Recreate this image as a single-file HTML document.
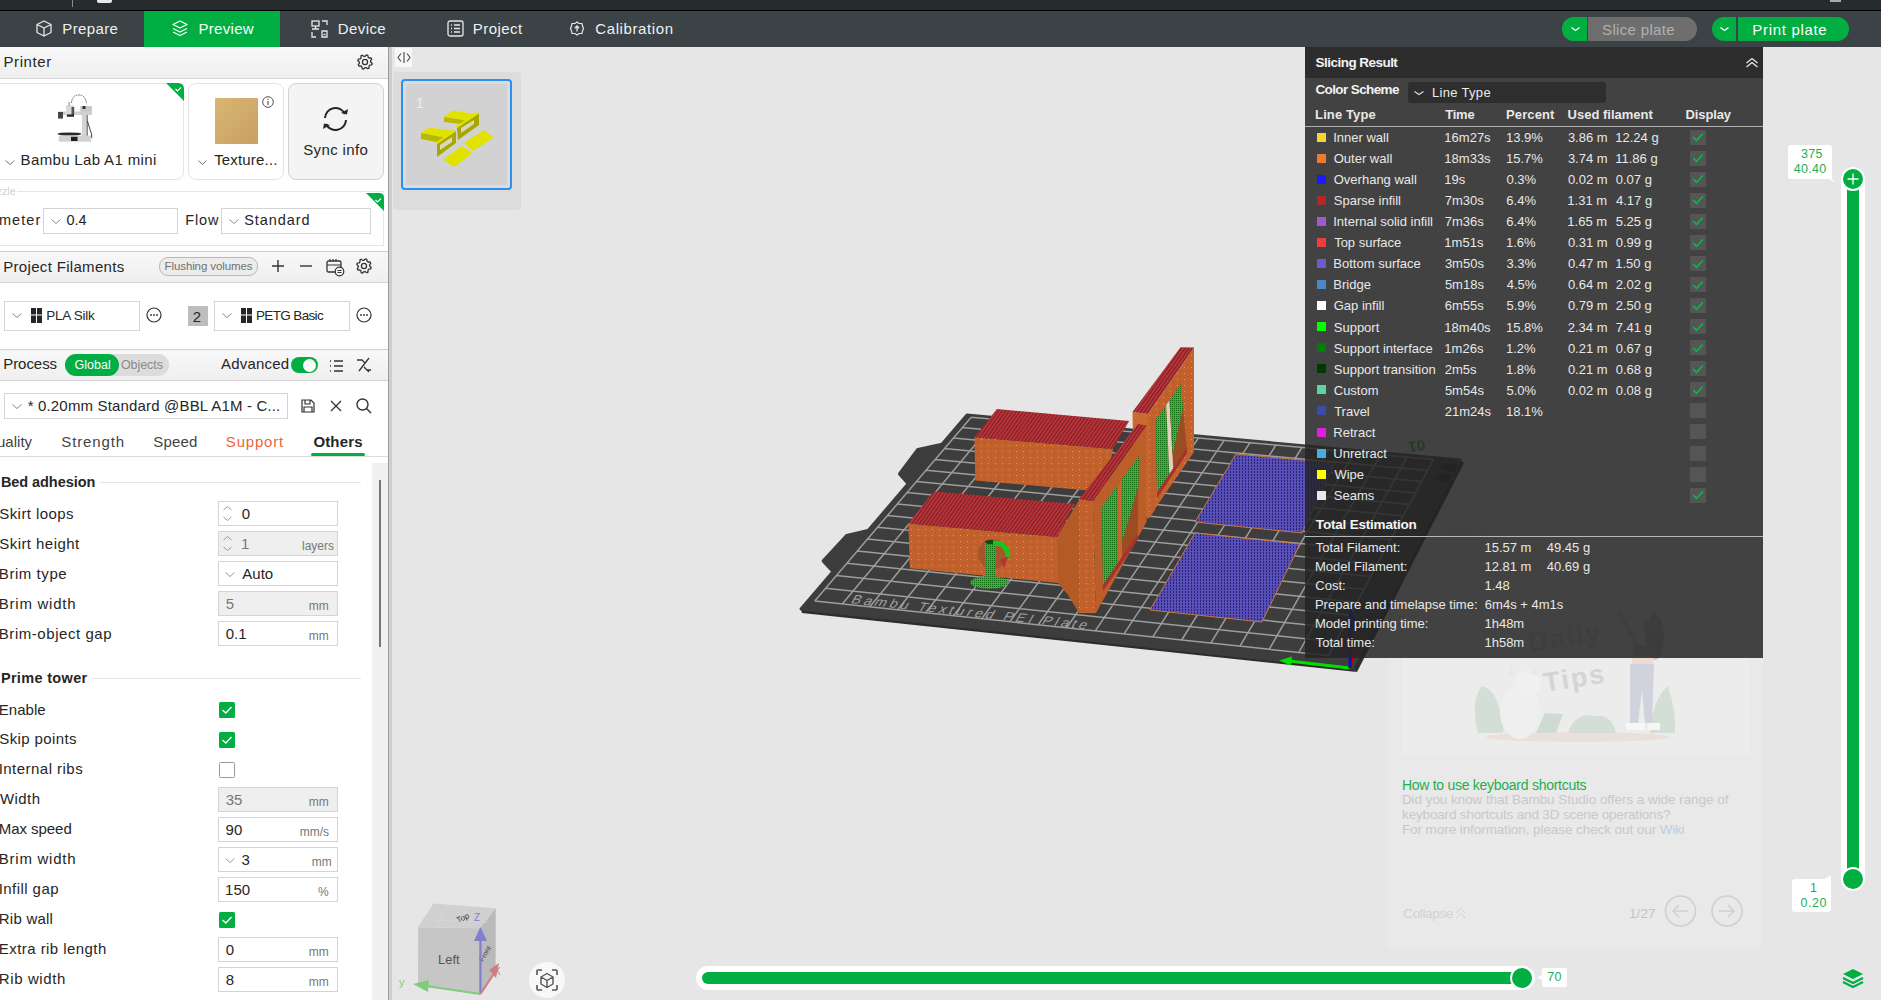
<!DOCTYPE html><html><head><meta charset="utf-8"><style>
*{margin:0;padding:0;box-sizing:border-box}
html,body{width:1881px;height:1000px;overflow:hidden;background:#e6e6e6;font-family:"Liberation Sans",sans-serif;position:relative}
.a{position:absolute}
.t{position:absolute;white-space:nowrap;line-height:1}
svg{position:absolute;overflow:visible}
</style></head><body><div class="a" style="left:0px;top:0px;width:1881px;height:10px;background:#262c2e"></div>
<div class="a" style="left:72px;top:0px;width:1px;height:7px;background:#8a8f90"></div>
<div class="a" style="left:97px;top:0px;width:15px;height:3px;background:#e8e8e8;border-radius:0 0 2px 2px"></div>
<div class="a" style="left:1830px;top:0px;width:11px;height:2px;background:#aaa"></div>
<div class="a" style="left:0px;top:10px;width:1881px;height:1px;background:#000"></div>
<div class="a" style="left:0px;top:11px;width:1881px;height:36px;background:#3b4346"></div>
<div class="a" style="left:144px;top:11px;width:136px;height:36px;background:#00ae42"></div>
<div class="t" style="left:62.30px;top:21.25px;font-size:15px;color:#f0f0f0;letter-spacing:0.375px;">Prepare</div>
<div class="t" style="left:198.50px;top:21.25px;font-size:15px;color:#fff;letter-spacing:0.308px;">Preview</div>
<div class="t" style="left:337.80px;top:21.25px;font-size:15px;color:#f0f0f0;letter-spacing:0.410px;">Device</div>
<div class="t" style="left:472.80px;top:21.25px;font-size:15px;color:#f0f0f0;letter-spacing:0.450px;">Project</div>
<div class="t" style="left:595.25px;top:21.25px;font-size:15px;color:#f0f0f0;letter-spacing:0.610px;">Calibration</div>
<svg style="left:36px;top:20px;" width="16" height="17" viewBox="0 0 16 17"><path d="M8 1 L15 4.5 L15 12.5 L8 16 L1 12.5 L1 4.5 Z M1 4.5 L8 8 L15 4.5 M8 8 L8 16" fill="none" stroke="#e8e8e8" stroke-width="1.3" stroke-linejoin="round"/></svg>
<svg style="left:172px;top:20px;" width="16" height="17" viewBox="0 0 16 17"><path d="M8 1 L15 4.5 L8 8 L1 4.5 Z M1 8.5 L8 12 L15 8.5 M1 12 L8 15.5 L15 12" fill="none" stroke="#fff" stroke-width="1.3" stroke-linejoin="round"/></svg>
<svg style="left:311px;top:20px;" width="18" height="18" viewBox="0 0 18 18"><rect x="1" y="1" width="7" height="5" fill="none" stroke="#e8e8e8" stroke-width="1.3"/><path d="M4.5 6 V9 M1 9 H8 M11 1 H16 V5 M1 12 V17 H5 M16 17 H11 V11 H16 Z M12.5 14.5 H14.5" fill="none" stroke="#e8e8e8" stroke-width="1.3"/></svg>
<svg style="left:447px;top:20px;" width="17" height="17" viewBox="0 0 17 17"><rect x="1" y="1" width="15" height="15" rx="2" fill="none" stroke="#e8e8e8" stroke-width="1.3"/><path d="M4 5 H5 M7 5 H13 M4 8.5 H5 M7 8.5 H13 M4 12 H5 M7 12 H13" stroke="#e8e8e8" stroke-width="1.3"/></svg>
<svg style="left:570px;top:21px;" width="14" height="15" viewBox="0 0 14 15"><path d="M7 1 L9 2.5 L12 2.5 L12.5 5 L13.5 7.5 L12.5 10 L12 12.5 L9 12.5 L7 14 L5 12.5 L2 12.5 L1.5 10 L0.5 7.5 L1.5 5 L2 2.5 L5 2.5 Z" fill="none" stroke="#e8e8e8" stroke-width="1.2"/><path d="M7 10.5 V5 M4.8 7.2 L7 5 L9.2 7.2" fill="none" stroke="#e8e8e8" stroke-width="1.3"/></svg>
<div class="a" style="left:1562px;top:17px;width:135px;height:24px;background:#6e6e6e;border-radius:12px"></div>
<div class="a" style="left:1562px;top:17px;width:25px;height:24px;background:#00ae42;border-radius:12px 0 0 12px"></div>
<div class="a" style="left:1587px;top:17px;width:1px;height:24px;background:#3b4346"></div>
<svg style="left:1571px;top:27px;" width="9" height="4" viewBox="0 0 9 4"><path d="M0.5 0.5 L4.5 3.5 L8.5 0.5" fill="none" stroke="#fff" stroke-width="1.3"/></svg>
<div class="t" style="left:1602.05px;top:21.75px;font-size:15px;color:#b0b0b0;letter-spacing:0.340px;">Slice plate</div>
<div class="a" style="left:1712px;top:17px;width:137px;height:24px;background:#00ae42;border-radius:12px"></div>
<div class="a" style="left:1736px;top:17px;width:2px;height:24px;background:#3b4346"></div>
<svg style="left:1720px;top:27px;" width="9" height="4" viewBox="0 0 9 4"><path d="M0.5 0.5 L4.5 3.5 L8.5 0.5" fill="none" stroke="#fff" stroke-width="1.3"/></svg>
<div class="t" style="left:1752.30px;top:21.75px;font-size:15px;color:#fff;letter-spacing:0.680px;">Print plate</div>
<div class="a" style="left:0px;top:47px;width:388px;height:953px;background:#fff"></div>
<div class="a" style="left:388px;top:47px;width:1px;height:953px;background:#9c9c9c"></div>
<div class="a" style="left:389px;top:47px;width:3px;height:953px;background:#cecece"></div>
<div class="a" style="left:0px;top:47px;width:388px;height:31px;background:linear-gradient(#f8f8f8,#efefef)"></div>
<div class="a" style="left:0px;top:78px;width:388px;height:1px;background:#d4d4d4"></div>
<div class="t" style="left:3.50px;top:54.45px;font-size:15px;color:#262626;letter-spacing:0.592px;">Printer</div>
<svg style="left:357px;top:54px;" width="16" height="16" viewBox="0 0 16 16"><polygon points="15.15,9.45 14.73,10.82 12.72,11.18 12.01,12.04 12.03,14.08 10.77,14.75 9.09,13.59 7.98,13.69 6.55,15.15 5.18,14.73 4.82,12.72 3.96,12.01 1.92,12.03 1.25,10.77 2.41,9.09 2.31,7.98 0.85,6.55 1.27,5.18 3.28,4.82 3.99,3.96 3.97,1.92 5.23,1.25 6.91,2.41 8.02,2.31 9.45,0.85 10.82,1.27 11.18,3.28 12.04,3.99 14.08,3.97 14.75,5.23 13.59,6.91 13.69,8.02" fill="none" stroke="#333" stroke-width="1.3" stroke-linejoin="round"/><circle cx="8" cy="8" r="2.55" fill="none" stroke="#333" stroke-width="1.3"/></svg>
<div class="a" style="left:-10px;top:83px;width:194px;height:97px;background:#fff;border:1px solid #e4e4e4;border-radius:8px"></div>
<svg style="left:166px;top:83px;" width="18" height="18" viewBox="0 0 18 18"><path d="M0 0 H12 Q18 0 18 6 V18 Z" fill="#00ae42"/><path d="M9.5 6 L11.5 8 L15 4.5" fill="none" stroke="#fff" stroke-width="1.1"/></svg>
<svg style="left:0;top:0" width="388" height="200" viewBox="0 0 388 200">
<path d="M71.5 103 Q72 95 78.6 95 Q86 95 86.6 104.3" fill="none" stroke="#555" stroke-width="0.9" stroke-dasharray="1.5 0.8"/>
<rect x="82" y="106" width="6" height="32" fill="#d4d4d4"/>
<rect x="86.5" y="106" width="1.5" height="32" fill="#8a8a8a"/>
<rect x="80.3" y="106" width="11.5" height="8.8" fill="#c8c8c8"/>
<rect x="82.5" y="106" width="3" height="3" fill="#333"/>
<rect x="58" y="111.5" width="33.8" height="3.3" fill="#d0d0d0"/>
<rect x="66" y="105.4" width="8.2" height="11" fill="#d9d9d9"/>
<rect x="71.5" y="107" width="2.7" height="8" fill="#555"/>
<rect x="67" y="114.5" width="7" height="2.2" fill="#222"/>
<rect x="68.5" y="102" width="1.2" height="4" fill="#999"/>
<rect x="58" y="112" width="5" height="6.6" fill="#444"/>
<ellipse cx="69.5" cy="134" rx="12" ry="1.6" fill="#2a2a2a"/>
<rect x="58.8" y="135.6" width="32.5" height="6.1" fill="#d2d2d2"/>
<rect x="71" y="136.8" width="6.5" height="4.2" fill="#1e1e1e"/>
<path d="M87.4 121 L91.5 134 L91.8 138" fill="none" stroke="#333" stroke-width="0.9"/>
</svg>
<svg style="left:5px;top:160px;" width="10" height="5" viewBox="0 0 10 5"><path d="M0.5 0.5 L5.0 4.5 L9.5 0.5" fill="none" stroke="#777" stroke-width="1"/></svg>
<div class="t" style="left:20.60px;top:152.25px;font-size:15px;color:#262626;letter-spacing:0.347px;">Bambu Lab A1 mini</div>
<div class="a" style="left:188px;top:83px;width:96px;height:97px;background:#fff;border:1px solid #e4e4e4;border-radius:8px"></div>
<div class="a" style="left:215px;top:98px;width:43px;height:46px;background:linear-gradient(135deg,#d8b673,#c8a062);border-radius:1px"></div>
<svg style="left:262px;top:96px;" width="12" height="12" viewBox="0 0 12 12"><circle cx="6" cy="6" r="5.3" fill="none" stroke="#555" stroke-width="1"/><path d="M6 5 V9" stroke="#555" stroke-width="1.2"/><circle cx="6" cy="3.3" r="0.7" fill="#555"/></svg>
<svg style="left:198px;top:160px;" width="9" height="5" viewBox="0 0 9 5"><path d="M0.5 0.5 L4.5 4.5 L8.5 0.5" fill="none" stroke="#777" stroke-width="1"/></svg>
<div class="t" style="left:214.20px;top:152.25px;font-size:15px;color:#262626;letter-spacing:0.167px;">Texture...</div>
<div class="a" style="left:288px;top:83px;width:96px;height:97px;background:#f4f4f4;border:1px solid #d2d2d2;border-radius:8px"></div>
<svg style="left:321px;top:105px;" width="29" height="28" viewBox="0 0 29 28"><path d="M4 13 A10.5 10.5 0 0 1 24 9" fill="none" stroke="#262626" stroke-width="2"/><path d="M25 15 A10.5 10.5 0 0 1 5 19" fill="none" stroke="#262626" stroke-width="2"/><path d="M20 8 L26 9.5 L27 4" fill="#262626"/><path d="M9 20 L3 18.5 L2 24" fill="#262626"/></svg>
<div class="t" style="left:303.25px;top:142.25px;font-size:15px;color:#262626;letter-spacing:0.369px;">Sync info</div>
<div class="t" style="left:-16.60px;top:186.07px;font-size:10.5px;color:#cfcfcf;letter-spacing:0.000px;">Nozzle</div>
<div class="a" style="left:17px;top:191px;width:367px;height:1px;background:#e6e6e6"></div>
<div class="a" style="left:383px;top:191px;width:1px;height:54px;background:#e6e6e6"></div>
<div class="a" style="left:-1px;top:245px;width:385px;height:1px;background:#e6e6e6"></div>
<svg style="left:366px;top:193px;" width="18" height="18" viewBox="0 0 18 18"><path d="M0 0 H13 Q18 0 18 5 V18 Z" fill="#00ae42"/><path d="M9.5 7 L11.5 9 L15 5.5" fill="none" stroke="#fff" stroke-width="1.1"/></svg>
<div class="t" style="left:-1.02px;top:212.68px;font-size:14.5px;color:#262626;letter-spacing:1.046px;">meter</div>
<div class="a" style="left:43px;top:208px;width:135px;height:26px;background:#fff;border:1px solid #d4d4d4"></div>
<svg style="left:51px;top:219px;" width="10" height="5" viewBox="0 0 10 5"><path d="M0.5 0.5 L5.0 4.5 L9.5 0.5" fill="none" stroke="#888" stroke-width="1"/></svg>
<div class="t" style="left:66.42px;top:212.68px;font-size:14.5px;color:#262626;letter-spacing:0.000px;">0.4</div>
<div class="t" style="left:185.24px;top:212.68px;font-size:14.5px;color:#262626;letter-spacing:0.888px;">Flow</div>
<div class="a" style="left:221px;top:208px;width:150px;height:26px;background:#fff;border:1px solid #d4d4d4"></div>
<svg style="left:229px;top:219px;" width="10" height="5" viewBox="0 0 10 5"><path d="M0.5 0.5 L5.0 4.5 L9.5 0.5" fill="none" stroke="#888" stroke-width="1"/></svg>
<div class="t" style="left:244.28px;top:212.68px;font-size:14.5px;color:#262626;letter-spacing:0.910px;">Standard</div>
<div class="a" style="left:0px;top:251px;width:388px;height:1px;background:#cfcfcf"></div>
<div class="a" style="left:0px;top:252px;width:388px;height:30px;background:linear-gradient(#f8f8f8,#efefef)"></div>
<div class="a" style="left:0px;top:282px;width:388px;height:1px;background:#d4d4d4"></div>
<div class="t" style="left:3.20px;top:258.75px;font-size:15px;color:#262626;letter-spacing:0.325px;">Project Filaments</div>
<div class="a" style="left:159px;top:257px;width:99px;height:19px;background:#ececec;border:1px solid #b8b8b8;border-radius:9px"></div>
<div class="t" style="left:164.58px;top:260.73px;font-size:11.5px;color:#707070;letter-spacing:-0.106px;">Flushing volumes</div>
<svg style="left:271px;top:259px;" width="14" height="14" viewBox="0 0 14 14"><path d="M7 1 V13 M1 7 H13" stroke="#333" stroke-width="1.4"/></svg>
<svg style="left:299px;top:259px;" width="14" height="14" viewBox="0 0 14 14"><path d="M1 7 H13" stroke="#333" stroke-width="1.4"/></svg>
<svg style="left:326px;top:258px;" width="19" height="18" viewBox="0 0 19 18"><rect x="1" y="3" width="14" height="11" rx="1.5" fill="none" stroke="#333" stroke-width="1.3"/><path d="M1 7 H15 M4 3 V1 M7 3 V1 M10 3 V1" stroke="#333" stroke-width="1.2"/><circle cx="13.5" cy="13.5" r="4.3" fill="#f3f3f3" stroke="#333" stroke-width="1.2"/><path d="M11.5 12.5 H15.5 M11.5 14.5 H15.5" stroke="#333" stroke-width="1"/></svg>
<svg style="left:356px;top:258px;" width="16" height="16" viewBox="0 0 16 16"><polygon points="15.15,9.45 14.73,10.82 12.72,11.18 12.01,12.04 12.03,14.08 10.77,14.75 9.09,13.59 7.98,13.69 6.55,15.15 5.18,14.73 4.82,12.72 3.96,12.01 1.92,12.03 1.25,10.77 2.41,9.09 2.31,7.98 0.85,6.55 1.27,5.18 3.28,4.82 3.99,3.96 3.97,1.92 5.23,1.25 6.91,2.41 8.02,2.31 9.45,0.85 10.82,1.27 11.18,3.28 12.04,3.99 14.08,3.97 14.75,5.23 13.59,6.91 13.69,8.02" fill="none" stroke="#333" stroke-width="1.3" stroke-linejoin="round"/><circle cx="8" cy="8" r="2.55" fill="none" stroke="#333" stroke-width="1.3"/></svg>
<div class="a" style="left:4px;top:301px;width:136px;height:30px;background:#fff;border:1px solid #d4d4d4"></div>
<svg style="left:12px;top:313px;" width="10" height="5" viewBox="0 0 10 5"><path d="M0.5 0.5 L5.0 4.5 L9.5 0.5" fill="none" stroke="#888" stroke-width="1"/></svg>
<svg style="left:31px;top:308px;" width="11" height="15" viewBox="0 0 11 15"><rect x="0" y="0" width="11" height="15" fill="#262626"/><path d="M5.5 0 V15 M0 7 H11" stroke="#fff" stroke-width="1"/></svg>
<div class="t" style="left:46.22px;top:308.82px;font-size:13.5px;color:#262626;letter-spacing:-0.263px;">PLA Silk</div>
<svg style="left:146px;top:307px;" width="16" height="16" viewBox="0 0 16 16"><circle cx="8" cy="8" r="7" fill="none" stroke="#333" stroke-width="1.2"/><circle cx="5" cy="8" r="0.9" fill="#333"/><circle cx="8" cy="8" r="0.9" fill="#333"/><circle cx="11" cy="8" r="0.9" fill="#333"/></svg>
<div class="a" style="left:188px;top:306px;width:20px;height:20px;background:#bdbdbd"></div>
<div class="t" style="left:192.75px;top:308.75px;font-size:15px;color:#262626;letter-spacing:0.000px;">2</div>
<div class="a" style="left:214px;top:301px;width:136px;height:30px;background:#fff;border:1px solid #d4d4d4"></div>
<svg style="left:222px;top:313px;" width="10" height="5" viewBox="0 0 10 5"><path d="M0.5 0.5 L5.0 4.5 L9.5 0.5" fill="none" stroke="#888" stroke-width="1"/></svg>
<svg style="left:241px;top:308px;" width="11" height="15" viewBox="0 0 11 15"><rect x="0" y="0" width="11" height="15" fill="#262626"/><path d="M5.5 0 V15 M0 7 H11" stroke="#fff" stroke-width="1"/></svg>
<div class="t" style="left:255.92px;top:308.82px;font-size:13.5px;color:#262626;letter-spacing:-0.632px;">PETG Basic</div>
<svg style="left:356px;top:307px;" width="16" height="16" viewBox="0 0 16 16"><circle cx="8" cy="8" r="7" fill="none" stroke="#333" stroke-width="1.2"/><circle cx="5" cy="8" r="0.9" fill="#333"/><circle cx="8" cy="8" r="0.9" fill="#333"/><circle cx="11" cy="8" r="0.9" fill="#333"/></svg>
<div class="a" style="left:0px;top:349px;width:388px;height:1px;background:#cfcfcf"></div>
<div class="a" style="left:0px;top:350px;width:388px;height:30px;background:linear-gradient(#f8f8f8,#efefef)"></div>
<div class="a" style="left:0px;top:380px;width:388px;height:1px;background:#d4d4d4"></div>
<div class="t" style="left:3.20px;top:355.95px;font-size:15px;color:#262626;letter-spacing:-0.042px;">Process</div>
<div class="a" style="left:65px;top:354px;width:104px;height:22px;background:#dcdcdc;border-radius:11px"></div>
<div class="a" style="left:65px;top:354px;width:54px;height:22px;background:#00ae42;border-radius:11px"></div>
<div class="t" style="left:74.38px;top:359.38px;font-size:12.5px;color:#fff;letter-spacing:0.050px;">Global</div>
<div class="t" style="left:120.88px;top:359.38px;font-size:12.5px;color:#8a8a8a;letter-spacing:-0.058px;">Objects</div>
<div class="t" style="left:221.00px;top:355.95px;font-size:15px;color:#262626;letter-spacing:0.214px;">Advanced</div>
<div class="a" style="left:291px;top:357px;width:27px;height:16px;background:#00ae42;border-radius:8px"></div>
<div class="a" style="left:303px;top:358.5px;width:13px;height:13px;background:#fff;border-radius:50%"></div>
<svg style="left:329px;top:359px;" width="15" height="14" viewBox="0 0 15 14"><path d="M1 2 H2 M5 2 H14 M1 7 H2 M5 7 H14 M1 12 H2 M5 12 H14" stroke="#333" stroke-width="1.4"/></svg>
<svg style="left:356px;top:357px;" width="16" height="16" viewBox="0 0 16 16"><path d="M1 3 H6 L9 6 M13 1 L3 14 M8 10 L11 13 H15 M11 13 L13 15" fill="none" stroke="#333" stroke-width="1.3"/></svg>
<div class="a" style="left:4px;top:393px;width:284px;height:26px;background:#fff;border:1px solid #d4d4d4"></div>
<svg style="left:12px;top:404px;" width="10" height="5" viewBox="0 0 10 5"><path d="M0.5 0.5 L5.0 4.5 L9.5 0.5" fill="none" stroke="#888" stroke-width="1"/></svg>
<div class="t" style="left:27.70px;top:398.45px;font-size:15px;color:#262626;letter-spacing:0.166px;">* 0.20mm Standard @BBL A1M - C...</div>
<svg style="left:301px;top:399px;" width="14" height="14" viewBox="0 0 14 14"><path d="M1 1 H10 L13 4 V13 H1 Z M4 1 V5 H9 V1 M3 13 V8 H11 V13" fill="none" stroke="#333" stroke-width="1.2"/></svg>
<svg style="left:330px;top:400px;" width="12" height="12" viewBox="0 0 12 12"><path d="M1 1 L11 11 M11 1 L1 11" stroke="#333" stroke-width="1.3"/></svg>
<svg style="left:356px;top:398px;" width="16" height="16" viewBox="0 0 16 16"><circle cx="6.5" cy="6.5" r="5.5" fill="none" stroke="#333" stroke-width="1.4"/><path d="M10.5 10.5 L15 15" stroke="#333" stroke-width="1.5"/></svg>
<div class="t" style="left:-14.65px;top:434.05px;font-size:15px;color:#444;letter-spacing:0.000px;">Quality</div>
<div class="t" style="left:61.25px;top:434.05px;font-size:15px;color:#444;letter-spacing:0.871px;">Strength</div>
<div class="t" style="left:153.25px;top:434.05px;font-size:15px;color:#444;letter-spacing:0.200px;">Speed</div>
<div class="t" style="left:225.85px;top:434.05px;font-size:15px;color:#f0643c;letter-spacing:0.800px;">Support</div>
<div class="t" style="left:313.40px;top:434.05px;font-size:15px;color:#262626;letter-spacing:0.150px;font-weight:bold;">Others</div>
<div class="a" style="left:311px;top:453px;width:54px;height:3px;background:#00ae42;border-radius:2px"></div>
<div class="a" style="left:0px;top:456px;width:388px;height:1px;background:#dcdcdc"></div>
<div class="a" style="left:372px;top:463px;width:16px;height:537px;background:#f0f0f0"></div>
<div class="a" style="left:379px;top:480px;width:2px;height:167px;background:#777"></div>
<div class="t" style="left:0.88px;top:474.68px;font-size:14.5px;color:#262626;letter-spacing:-0.058px;font-weight:bold;">Bed adhesion</div>
<div class="a" style="left:100px;top:482px;width:261px;height:1px;background:#e6e6e6"></div>
<div class="t" style="left:-0.75px;top:505.95px;font-size:15px;color:#262626;letter-spacing:0.430px;">Skirt loops</div>
<div class="a" style="left:218px;top:501px;width:120px;height:25px;background:#fff;border:1px solid #d4d4d4"></div>
<svg style="left:222px;top:505px;" width="11" height="17" viewBox="0 0 11 17"><path d="M1.5 5 L5.5 1.5 L9.5 5 M1.5 12 L5.5 15.5 L9.5 12" fill="none" stroke="#999" stroke-width="1"/></svg>
<div class="t" style="left:241.70px;top:505.95px;font-size:15px;color:#262626;letter-spacing:0.000px;">0</div>
<div class="t" style="left:-0.75px;top:535.95px;font-size:15px;color:#262626;letter-spacing:0.445px;">Skirt height</div>
<div class="a" style="left:218px;top:531px;width:120px;height:25px;background:#efefef;border:1px solid #d4d4d4"></div>
<svg style="left:222px;top:535px;" width="11" height="17" viewBox="0 0 11 17"><path d="M1.5 5 L5.5 1.5 L9.5 5 M1.5 12 L5.5 15.5 L9.5 12" fill="none" stroke="#999" stroke-width="1"/></svg>
<div class="t" style="left:241.10px;top:535.95px;font-size:15px;color:#777;letter-spacing:0.000px;">1</div>
<div class="t" style="left:302.04px;top:539.80px;font-size:12px;color:#777;letter-spacing:0.000px;">layers</div>
<div class="t" style="left:-1.20px;top:565.95px;font-size:15px;color:#262626;letter-spacing:0.563px;">Brim type</div>
<div class="a" style="left:218px;top:561px;width:120px;height:25px;background:#fff;border:1px solid #d4d4d4"></div>
<svg style="left:225.3px;top:572px;" width="10" height="5" viewBox="0 0 10 5"><path d="M0.5 0.5 L5.0 4.5 L9.5 0.5" fill="none" stroke="#999" stroke-width="1"/></svg>
<div class="t" style="left:242.30px;top:565.95px;font-size:15px;color:#262626;letter-spacing:0.000px;">Auto</div>
<div class="t" style="left:-1.20px;top:595.95px;font-size:15px;color:#262626;letter-spacing:0.744px;">Brim width</div>
<div class="a" style="left:218px;top:591px;width:120px;height:25px;background:#efefef;border:1px solid #d4d4d4"></div>
<div class="t" style="left:225.70px;top:595.95px;font-size:15px;color:#777;letter-spacing:0.000px;">5</div>
<div class="t" style="left:308.80px;top:599.80px;font-size:12px;color:#777;letter-spacing:0.000px;">mm</div>
<div class="t" style="left:-1.20px;top:625.95px;font-size:15px;color:#262626;letter-spacing:0.546px;">Brim-object gap</div>
<div class="a" style="left:218px;top:621px;width:120px;height:25px;background:#fff;border:1px solid #d4d4d4"></div>
<div class="t" style="left:225.70px;top:625.95px;font-size:15px;color:#262626;letter-spacing:0.000px;">0.1</div>
<div class="t" style="left:308.80px;top:629.80px;font-size:12px;color:#777;letter-spacing:0.000px;">mm</div>
<div class="t" style="left:0.88px;top:670.67px;font-size:14.5px;color:#262626;letter-spacing:0.332px;font-weight:bold;">Prime tower</div>
<div class="a" style="left:92px;top:678px;width:269px;height:1px;background:#e6e6e6"></div>
<div class="t" style="left:-1.20px;top:701.55px;font-size:15px;color:#262626;letter-spacing:0.030px;">Enable</div>
<svg style="left:219px;top:702px;" width="16" height="16" viewBox="0 0 16 16"><rect width="16" height="16" rx="1.5" fill="#00ae42"/><path d="M3.5 8 L6.8 11 L12.5 5" fill="none" stroke="#fff" stroke-width="1.4"/></svg>
<div class="t" style="left:-0.75px;top:731.05px;font-size:15px;color:#262626;letter-spacing:0.400px;">Skip points</div>
<svg style="left:219px;top:732px;" width="16" height="16" viewBox="0 0 16 16"><rect width="16" height="16" rx="1.5" fill="#00ae42"/><path d="M3.5 8 L6.8 11 L12.5 5" fill="none" stroke="#fff" stroke-width="1.4"/></svg>
<div class="t" style="left:-1.35px;top:761.05px;font-size:15px;color:#262626;letter-spacing:0.471px;">Internal ribs</div>
<div class="a" style="left:219px;top:762px;width:16px;height:16px;background:#fff;border:1px solid #9a9a9a;border-radius:1.5px"></div>
<div class="t" style="left:0.00px;top:791.05px;font-size:15px;color:#262626;letter-spacing:0.412px;">Width</div>
<div class="a" style="left:218px;top:787px;width:120px;height:25px;background:#efefef;border:1px solid #d4d4d4"></div>
<div class="t" style="left:225.70px;top:791.95px;font-size:15px;color:#777;letter-spacing:0.000px;">35</div>
<div class="t" style="left:308.80px;top:795.80px;font-size:12px;color:#777;letter-spacing:0.000px;">mm</div>
<div class="t" style="left:-1.20px;top:821.05px;font-size:15px;color:#262626;letter-spacing:-0.056px;">Max speed</div>
<div class="a" style="left:218px;top:817px;width:120px;height:25px;background:#fff;border:1px solid #d4d4d4"></div>
<div class="t" style="left:225.55px;top:821.95px;font-size:15px;color:#262626;letter-spacing:0.000px;">90</div>
<div class="t" style="left:299.80px;top:825.80px;font-size:12px;color:#777;letter-spacing:0.000px;">mm/s</div>
<div class="t" style="left:-1.20px;top:851.05px;font-size:15px;color:#262626;letter-spacing:0.744px;">Brim width</div>
<div class="a" style="left:218px;top:847px;width:120px;height:25px;background:#fff;border:1px solid #d4d4d4"></div>
<svg style="left:225px;top:858px;" width="10" height="5" viewBox="0 0 10 5"><path d="M0.5 0.5 L5.0 4.5 L9.5 0.5" fill="none" stroke="#999" stroke-width="1"/></svg>
<div class="t" style="left:241.40px;top:851.95px;font-size:15px;color:#262626;letter-spacing:0.000px;">3</div>
<div class="t" style="left:311.80px;top:855.80px;font-size:12px;color:#777;letter-spacing:0.000px;">mm</div>
<div class="t" style="left:-1.35px;top:881.05px;font-size:15px;color:#262626;letter-spacing:0.444px;">Infill gap</div>
<div class="a" style="left:218px;top:877px;width:120px;height:25px;background:#fff;border:1px solid #d4d4d4"></div>
<div class="t" style="left:225.10px;top:881.95px;font-size:15px;color:#262626;letter-spacing:0.000px;">150</div>
<div class="t" style="left:318.10px;top:885.80px;font-size:12px;color:#777;letter-spacing:0.000px;">%</div>
<div class="t" style="left:-1.20px;top:911.05px;font-size:15px;color:#262626;letter-spacing:0.229px;">Rib wall</div>
<svg style="left:219px;top:912px;" width="16" height="16" viewBox="0 0 16 16"><rect width="16" height="16" rx="1.5" fill="#00ae42"/><path d="M3.5 8 L6.8 11 L12.5 5" fill="none" stroke="#fff" stroke-width="1.4"/></svg>
<div class="t" style="left:-1.20px;top:941.05px;font-size:15px;color:#262626;letter-spacing:0.440px;">Extra rib length</div>
<div class="a" style="left:218px;top:937px;width:120px;height:25px;background:#fff;border:1px solid #d4d4d4"></div>
<div class="t" style="left:225.70px;top:941.95px;font-size:15px;color:#262626;letter-spacing:0.000px;">0</div>
<div class="t" style="left:308.80px;top:945.80px;font-size:12px;color:#777;letter-spacing:0.000px;">mm</div>
<div class="t" style="left:-1.20px;top:971.05px;font-size:15px;color:#262626;letter-spacing:0.606px;">Rib width</div>
<div class="a" style="left:218px;top:967px;width:120px;height:25px;background:#fff;border:1px solid #d4d4d4"></div>
<div class="t" style="left:225.70px;top:971.95px;font-size:15px;color:#262626;letter-spacing:0.000px;">8</div>
<div class="t" style="left:308.80px;top:975.80px;font-size:12px;color:#777;letter-spacing:0.000px;">mm</div>
<svg style="left:0;top:0" width="1881" height="1000" viewBox="0 0 1881 1000"><defs>
<pattern id="red" width="3" height="3" patternUnits="userSpaceOnUse" patternTransform="rotate(35)"><rect width="3" height="3" fill="#b8343a"/><rect width="1" height="3" fill="#7a1f22"/></pattern>
<pattern id="org" width="7" height="6" patternUnits="userSpaceOnUse"><rect width="7" height="6" fill="#c2612c"/><rect x="1" y="1" width="1" height="1" fill="#d99870"/><rect x="4" y="4" width="1" height="1" fill="#a85428"/></pattern>
<pattern id="grn" width="2" height="2" patternUnits="userSpaceOnUse"><rect width="2" height="2" fill="#22c422"/><rect width="1" height="1" fill="#0c6a0c"/></pattern>
<pattern id="blu" width="3" height="3" patternUnits="userSpaceOnUse"><rect width="3" height="3" fill="#5850b8"/><rect width="1" height="2" fill="#2a2470"/></pattern>
</defs><polygon points="801.0,609.0 1352.0,668.0 1357.0,672.0 802.0,613.0" fill="#2c2d2c" /><polygon points="1460.0,460.0 1352.0,668.0 1357.0,672.0 1464.0,463.0" fill="#2c2d2c" /><polygon points="941.0,445.0 918.0,450.0 900.0,474.0 909.0,484.0" fill="#3c3d3c" stroke="#3c3d3c" stroke-width="4" stroke-linejoin="round"/><polygon points="868.0,531.0 846.7,536.0 823.6,561.0 832.0,570.0" fill="#3c3d3c" stroke="#3c3d3c" stroke-width="4" stroke-linejoin="round"/><polygon points="967.0,415.0 1460.0,460.0 1352.0,668.0 801.0,609.0" fill="#3c3d3c" stroke="#3c3d3c" stroke-width="3" stroke-linejoin="round"/><path d="M971.2 417.2L814.8 601.0M996.1 419.5L842.3 603.9M1021.1 421.8L869.9 606.8M1046.1 424.1L897.7 609.8M1071.3 426.4L925.6 612.8M1096.5 428.7L953.5 615.7M1121.9 431.0L981.7 618.7M1147.3 433.3L1009.9 621.7M1172.8 435.7L1038.2 624.7M1198.5 438.0L1066.7 627.8M1224.2 440.4L1095.3 630.8M1250.0 442.7L1124.0 633.9M1275.9 445.1L1152.8 636.9M1301.9 447.5L1181.7 640.0M1328.0 449.9L1210.8 643.1M1354.3 452.3L1240.0 646.2M1380.6 454.7L1269.3 649.3M1407.0 457.1L1298.8 652.5M1433.5 459.5L1328.4 655.6M971.2 417.2L1433.5 459.5M962.4 427.6L1427.6 470.5M953.5 438.0L1421.7 481.6M944.5 448.6L1415.6 492.9M935.3 459.4L1409.5 504.4M926.1 470.3L1403.2 516.0M916.6 481.4L1396.9 527.7M907.1 492.6L1390.5 539.7M897.4 503.9L1384.0 551.8M887.6 515.5L1377.4 564.1M877.6 527.2L1370.7 576.6M867.5 539.0L1363.9 589.3M857.3 551.0L1357.0 602.2M846.9 563.3L1350.0 615.2M836.3 575.6L1342.9 628.5M825.6 588.2L1335.7 641.9M814.8 601.0L1328.4 655.6" stroke="#9c9d9c" stroke-width="1.5" fill="none"/><text x="0" y="0" transform="matrix(0.99,0.11,-0.5,0.85,850,603)" font-size="14" fill="#a0a2a2" font-family="Liberation Sans" letter-spacing="3.2">Bambu Textured PEI Plate</text><text x="0" y="0" transform="translate(1416 446) rotate(172) translate(-9 5)" font-size="15" font-weight="bold" fill="#22b04a" font-family="Liberation Sans">01</text><polygon points="1443.0,463.0 1458.0,465.0 1454.0,472.0 1439.0,470.0" fill="#1c1c1c" /><polygon points="1439.0,473.0 1452.0,475.0 1448.0,482.0 1435.0,480.0" fill="#1c1c1c" /><polygon points="1236.0,454.0 1335.0,463.0 1302.0,533.0 1195.0,522.0" fill="url(#blu)" stroke="#c87a3a" stroke-width="1"/><polygon points="1195.0,533.0 1300.0,544.0 1262.0,622.0 1150.0,610.0" fill="url(#blu)" stroke="#c87a3a" stroke-width="1"/><polygon points="974.4,437.2 1113.0,449.0 1105.0,492.0 975.3,480.4" fill="url(#org)" /><polygon points="996.9,409.0 1129.2,421.0 1113.0,449.0 974.4,437.2" fill="url(#red)" /><polygon points="1132.5,412.0 1148.0,414.0 1155.0,510.0 1148.0,519.0 1134.0,500.0" fill="#c96a30" /><polygon points="1148.0,414.0 1194.0,347.6 1194.0,452.0 1148.0,519.0" fill="url(#org)" /><polygon points="1132.5,412.0 1180.5,347.2 1194.0,347.6 1148.0,414.0" fill="url(#red)" /><polygon points="1155.5,420.0 1181.0,384.0 1187.0,453.0 1157.0,498.0" fill="#9a4c22" /><polygon points="1155.5,420.0 1166.2,404.9 1169.5,476.9 1157.0,495.7" fill="url(#grn)" /><polygon points="1166.2,404.9 1169.5,400.2 1173.4,471.1 1169.5,476.9" fill="#e2cfbd" /><polygon points="1169.5,400.2 1181.0,384.0 1183.1,408.1 1172.5,455.0" fill="url(#grn)" /><polygon points="1156.9,492.5 1186.6,448.2 1187.0,453.0 1157.0,498.0" fill="#a83030" /><polygon points="908.4,523.5 1058.0,537.0 1058.0,583.0 909.8,568.3" fill="url(#org)" /><polygon points="933.6,491.3 1075.0,504.0 1057.0,537.0 908.4,523.5" fill="url(#red)" /><polygon points="1057.0,537.0 1079.0,500.0 1079.0,613.0 1068.0,595.0 1058.0,583.0" fill="#b35a26" /><polygon points="1079.0,499.0 1093.0,501.0 1096.0,613.0 1079.0,613.0" fill="url(#org)" /><polygon points="1093.0,501.0 1146.5,425.4 1146.5,522.0 1096.0,613.0" fill="#bb5e2a" /><polygon points="1079.0,499.0 1138.0,424.0 1146.5,425.4 1093.0,501.0" fill="url(#red)" /><polygon points="1101.5,507.0 1139.0,456.0 1137.5,540.0 1103.0,591.0" fill="#9a4c22" /><polygon points="1101.5,507.0 1117.2,485.6 1117.5,567.1 1103.0,588.5" fill="url(#grn)" /><polygon points="1117.2,485.6 1122.1,478.9 1122.0,560.4 1117.5,567.1" fill="#c7652c" /><polygon points="1122.1,478.9 1139.0,456.0 1138.5,485.4 1122.0,542.0" fill="url(#grn)" /><polygon points="1102.9,585.1 1137.6,534.1 1137.5,540.0 1103.0,591.0" fill="#a83030" /><ellipse cx="993" cy="554" rx="15" ry="15" fill="#a5552c"/><path d="M1000 560 L1008 556 L1004 568 Z" fill="#b83030"/><ellipse cx="989.5" cy="582.5" rx="19" ry="6.3" fill="url(#grn)"/><path d="M985 542 L996 542 L995 582 L986 582 Z" fill="url(#grn)"/><ellipse cx="990.5" cy="542" rx="5.5" ry="2" fill="#0a4a0a"/><path d="M993 543 Q1008 543 1008 557" stroke="#1fc01f" stroke-width="5" fill="none"/><path d="M1349.5 668 L1289 661" stroke="#00e000" stroke-width="3"/><polygon points="1279,660.5 1292,656.5 1291,665.5" fill="#00e000"/><path d="M1349.5 668 L1361 638" stroke="#c00000" stroke-width="2.5"/><path d="M1350 668 L1351 619" stroke="#1010c0" stroke-width="3"/><polygon points="1351.5,609 1346.5,621 1355.5,621" fill="#1010c0"/></svg>
<div class="a" style="left:395px;top:48px;width:17px;height:19px;background:#f7f7f7"></div>
<svg style="left:397px;top:52px;" width="14" height="11" viewBox="0 0 14 11"><path d="M4 1.5 L1 5.5 L4 9.5 M10 1.5 L13 5.5 L10 9.5 M7 0 V11" fill="none" stroke="#444" stroke-width="1.1"/></svg>
<div class="a" style="left:393px;top:72px;width:128px;height:138px;background:#dcdcdc;border-radius:3px"></div>
<div class="a" style="left:401px;top:79px;width:111px;height:111px;background:#dcdcdc;border:2px solid #2f8ff0;border-radius:4px"></div>
<div class="a" style="left:406px;top:84px;width:101px;height:101px;background:#d2d2d2"></div>
<div class="t" style="left:415.88px;top:95.60px;font-size:14px;color:#f0f0f0;letter-spacing:0.000px;">1</div>
<svg style="left:0;top:0" width="1881" height="1000" viewBox="0 0 1881 1000">
<polygon points="464,143 484,130 494,137.6 473,151" fill="#e2e200"/>
<polygon points="443,159.6 462,146 472.4,153.6 454,167" fill="#e2e200"/>
<polygon points="444,117 452.4,110.4 479,114.4 469,121" fill="#e2e200"/>
<polygon points="444,117 469,121 469,125 444,122" fill="#b9b900"/>
<polygon points="457,128 479,113.6 479,125 458,140" fill="#a8a800"/>
<polygon points="455,127 477,112 479,113.6 457,128" fill="#e2e200"/>
<polygon points="461,128 474,120 474,124 461,133" fill="#d8d8c0"/>
<polygon points="421,133 429,127.4 456,131 447,138" fill="#e2e200"/>
<polygon points="421,133 447,138 447,144 421,139" fill="#b9b900"/>
<polygon points="437,144 456,131 456,143 437,157" fill="#a8a800"/>
<polygon points="435,143 454,130 456,131 437,144" fill="#e2e200"/>
<polygon points="440,145 452,137 452,142 440,150" fill="#d8d8c0"/>
</svg>
<div class="a" style="left:1388px;top:610px;width:375px;height:338px;background:#e9e9e9;border-radius:4px"></div>
<div class="t" style="left:1444.35px;top:522.95px;font-size:13px;color:#d8d8d8;letter-spacing:0.000px;">Slice ok.</div>
<div class="a" style="left:1402px;top:610px;width:347px;height:145px;background:#ececec"></div>
<svg style="left:0;top:0" width="1881" height="1000" viewBox="0 0 1881 1000">
<text x="1530" y="652" font-family="Liberation Sans" font-weight="bold" font-size="27" fill="#cfcfcf" letter-spacing="2" transform="rotate(-9 1530 652)">Daily</text>
<text x="1545" y="692" font-family="Liberation Sans" font-weight="bold" font-size="27" fill="#d4d4d4" letter-spacing="2" transform="rotate(-9 1545 692)">Tips</text>
<ellipse cx="1578" cy="737" rx="92" ry="5" fill="#ebdfdb"/>
<path d="M1478 733 Q1470 700 1482 686 Q1496 690 1500 712 Q1505 725 1503 733 Z" fill="#d3ded6"/>
<path d="M1536 733 L1545 713 L1563 714 L1556 733 Z" fill="#cfdad3"/>
<path d="M1568 733 Q1575 712 1595 716 Q1612 714 1616 733 Z" fill="#d3ded6"/>
<path d="M1650 733 Q1652 700 1668 686 Q1676 710 1675 733 Z" fill="#d3ded6"/>
<ellipse cx="1520" cy="712" rx="20" ry="27" fill="#efefef"/>
<circle cx="1528" cy="684" r="13" fill="#f0f0f0"/>
<ellipse cx="1655" cy="637" rx="9" ry="23" fill="#c9c4c2"/>
<circle cx="1649" cy="626" r="6" fill="#d8c6bc"/>
<path d="M1641 652 L1620 614" stroke="#dacdc6" stroke-width="3" stroke-linecap="round"/>
<path d="M1634 645 L1652 645 L1653 660 L1632 660 Z" fill="#d5c8c2"/>
<rect x="1632" y="657" width="21" height="8" fill="#eddcd3"/>
<path d="M1630 664 L1654 664 L1652 723 L1645 723 L1642 690 L1638 723 L1630 723 Z" fill="#d0d3de"/>
<path d="M1626 723 L1645 723 L1645 730 L1626 730 Z M1648 723 L1660 723 L1660 730 L1648 730 Z" fill="#f6f6f6"/>
<path d="M1508 676 L1511 666 L1516 674 Z M1530 674 L1535 665 L1537 675 Z" fill="#f0e4e4"/>
</svg>
<div class="t" style="left:1401.88px;top:777.60px;font-size:14px;color:#1fae50;letter-spacing:-0.269px;">How to use keyboard shortcuts</div>
<div class="t" style="left:1401.92px;top:792.52px;font-size:13.5px;color:#c8c8c8;letter-spacing:-0.052px;">Did you know that Bambu Studio offers a wide range of</div>
<div class="t" style="left:1402.06px;top:807.52px;font-size:13.5px;color:#c8c8c8;letter-spacing:-0.165px;">keyboard shortcuts and 3D scene operations?</div>
<div class="t" style="left:1401.92px;top:822.52px;font-size:13.5px;color:#c8c8c8;letter-spacing:-0.075px;">For more information, please check out our</div>
<div class="t" style="left:1659.70px;top:822.52px;font-size:13.5px;color:#b8cfe6;letter-spacing:-0.235px;">Wiki</div>
<div class="t" style="left:1403.33px;top:907.02px;font-size:13.5px;color:#d2d2d2;letter-spacing:-0.366px;">Collapse</div>
<svg style="left:1455px;top:907px;" width="11" height="12" viewBox="0 0 11 12"><path d="M1 6 L5.5 1.5 L10 6 M1 11 L5.5 6.5 L10 11" fill="none" stroke="#d2d2d2" stroke-width="1"/></svg>
<div class="t" style="left:1628.92px;top:906.52px;font-size:13.5px;color:#c4c4c4;letter-spacing:0.143px;">1/27</div>
<svg style="left:1665px;top:895px;" width="32" height="32" viewBox="0 0 32 32"><circle cx="15.5" cy="16" r="15" fill="none" stroke="#cfcfcf" stroke-width="1.5"/><path d="M8 16 H23 M14 10 L8 16 L14 22" fill="none" stroke="#cfcfcf" stroke-width="1.5"/></svg>
<svg style="left:1711px;top:895px;" width="32" height="32" viewBox="0 0 32 32"><circle cx="16" cy="16" r="15" fill="none" stroke="#cfcfcf" stroke-width="1.5"/><path d="M8 16 H23 M17 10 L23 16 L17 22" fill="none" stroke="#cfcfcf" stroke-width="1.5"/></svg>
<div class="a" style="left:1305px;top:47px;width:458px;height:31px;background:#2d2d2d"></div>
<div class="a" style="left:1305px;top:78px;width:458px;height:580px;background:rgba(36,36,36,0.85)"></div>
<div class="t" style="left:1315.60px;top:55.93px;font-size:13.5px;color:#f2f2f2;letter-spacing:-0.538px;font-weight:bold;">Slicing Result</div>
<svg style="left:1745px;top:57px;" width="14" height="11" viewBox="0 0 14 11"><path d="M1.5 6 L7 1.5 L12.5 6 M1.5 10 L7 5.5 L12.5 10" fill="none" stroke="#eee" stroke-width="1.2"/></svg>
<div class="t" style="left:1315.46px;top:82.53px;font-size:13.5px;color:#f2f2f2;letter-spacing:-0.616px;font-weight:bold;">Color Scheme</div>
<div class="a" style="left:1408px;top:82px;width:198px;height:21px;background:#2e2e2e;border-radius:3px"></div>
<svg style="left:1414px;top:91px;" width="10" height="4" viewBox="0 0 10 4"><path d="M0.5 0.5 L5.0 3.5 L9.5 0.5" fill="none" stroke="#ddd" stroke-width="1.1"/></svg>
<div class="t" style="left:1431.96px;top:86.25px;font-size:13px;color:#ececec;letter-spacing:0.316px;">Line Type</div>
<div class="t" style="left:1315.09px;top:108.45px;font-size:13px;color:#e8e8e8;letter-spacing:0.116px;font-weight:bold;">Line Type</div>
<div class="t" style="left:1445.27px;top:108.45px;font-size:13px;color:#e8e8e8;letter-spacing:-0.237px;font-weight:bold;">Time</div>
<div class="t" style="left:1506.09px;top:108.45px;font-size:13px;color:#e8e8e8;letter-spacing:0.105px;font-weight:bold;">Percent</div>
<div class="t" style="left:1567.62px;top:108.45px;font-size:13px;color:#e8e8e8;letter-spacing:-0.003px;font-weight:bold;">Used filament</div>
<div class="t" style="left:1685.59px;top:108.45px;font-size:13px;color:#e8e8e8;letter-spacing:-0.123px;font-weight:bold;">Display</div>
<div class="a" style="left:1305px;top:126px;width:458px;height:1px;background:#b0b0b0"></div>
<div class="a" style="left:1317px;top:133px;width:9px;height:9px;background:#f5d33a"></div>
<div class="t" style="left:1333.23px;top:131.05px;font-size:13px;color:#e8e8e8;letter-spacing:0.000px;">Inner wall</div>
<div class="t" style="left:1444.36px;top:131.05px;font-size:13px;color:#e8e8e8;letter-spacing:0.000px;">16m27s</div>
<div class="t" style="left:1505.96px;top:131.05px;font-size:13px;color:#e8e8e8;letter-spacing:0.000px;">13.9%</div>
<div class="t" style="left:1567.88px;top:131.05px;font-size:13px;color:#e8e8e8;letter-spacing:0.000px;">3.86 m</div>
<div class="t" style="left:1615.26px;top:131.05px;font-size:13px;color:#e8e8e8;letter-spacing:0.000px;">12.24 g</div>
<div class="a" style="left:1690px;top:130px;width:16px;height:15px;background:#555555"></div>
<svg style="left:1692px;top:132px;" width="12" height="10" viewBox="0 0 12 10"><path d="M1.2 5 L4.5 8.3 L10.8 1.5" fill="none" stroke="#00c040" stroke-width="1.6"/></svg>
<div class="a" style="left:1317px;top:154px;width:9px;height:9px;background:#f27a2e"></div>
<div class="t" style="left:1333.75px;top:152.10px;font-size:13px;color:#e8e8e8;letter-spacing:0.000px;">Outer wall</div>
<div class="t" style="left:1444.36px;top:152.10px;font-size:13px;color:#e8e8e8;letter-spacing:0.000px;">18m33s</div>
<div class="t" style="left:1505.96px;top:152.10px;font-size:13px;color:#e8e8e8;letter-spacing:0.000px;">15.7%</div>
<div class="t" style="left:1567.88px;top:152.10px;font-size:13px;color:#e8e8e8;letter-spacing:0.000px;">3.74 m</div>
<div class="t" style="left:1615.26px;top:152.10px;font-size:13px;color:#e8e8e8;letter-spacing:0.000px;">11.86 g</div>
<div class="a" style="left:1690px;top:151px;width:16px;height:15px;background:#555555"></div>
<svg style="left:1692px;top:153px;" width="12" height="10" viewBox="0 0 12 10"><path d="M1.2 5 L4.5 8.3 L10.8 1.5" fill="none" stroke="#00c040" stroke-width="1.6"/></svg>
<div class="a" style="left:1317px;top:175px;width:9px;height:9px;background:#1a1aff"></div>
<div class="t" style="left:1333.75px;top:173.15px;font-size:13px;color:#e8e8e8;letter-spacing:0.000px;">Overhang wall</div>
<div class="t" style="left:1444.36px;top:173.15px;font-size:13px;color:#e8e8e8;letter-spacing:0.000px;">19s</div>
<div class="t" style="left:1506.48px;top:173.15px;font-size:13px;color:#e8e8e8;letter-spacing:0.000px;">0.3%</div>
<div class="t" style="left:1567.88px;top:173.15px;font-size:13px;color:#e8e8e8;letter-spacing:0.000px;">0.02 m</div>
<div class="t" style="left:1615.78px;top:173.15px;font-size:13px;color:#e8e8e8;letter-spacing:0.000px;">0.07 g</div>
<div class="a" style="left:1690px;top:172px;width:16px;height:15px;background:#555555"></div>
<svg style="left:1692px;top:174px;" width="12" height="10" viewBox="0 0 12 10"><path d="M1.2 5 L4.5 8.3 L10.8 1.5" fill="none" stroke="#00c040" stroke-width="1.6"/></svg>
<div class="a" style="left:1317px;top:196px;width:9px;height:9px;background:#b02828"></div>
<div class="t" style="left:1333.75px;top:194.20px;font-size:13px;color:#e8e8e8;letter-spacing:0.000px;">Sparse infill</div>
<div class="t" style="left:1444.75px;top:194.20px;font-size:13px;color:#e8e8e8;letter-spacing:0.000px;">7m30s</div>
<div class="t" style="left:1506.35px;top:194.20px;font-size:13px;color:#e8e8e8;letter-spacing:0.000px;">6.4%</div>
<div class="t" style="left:1567.36px;top:194.20px;font-size:13px;color:#e8e8e8;letter-spacing:0.000px;">1.31 m</div>
<div class="t" style="left:1616.04px;top:194.20px;font-size:13px;color:#e8e8e8;letter-spacing:0.000px;">4.17 g</div>
<div class="a" style="left:1690px;top:193px;width:16px;height:15px;background:#555555"></div>
<svg style="left:1692px;top:195px;" width="12" height="10" viewBox="0 0 12 10"><path d="M1.2 5 L4.5 8.3 L10.8 1.5" fill="none" stroke="#00c040" stroke-width="1.6"/></svg>
<div class="a" style="left:1317px;top:217px;width:9px;height:9px;background:#9f5ad0"></div>
<div class="t" style="left:1333.23px;top:215.25px;font-size:13px;color:#e8e8e8;letter-spacing:0.000px;">Internal solid infill</div>
<div class="t" style="left:1444.75px;top:215.25px;font-size:13px;color:#e8e8e8;letter-spacing:0.000px;">7m36s</div>
<div class="t" style="left:1506.35px;top:215.25px;font-size:13px;color:#e8e8e8;letter-spacing:0.000px;">6.4%</div>
<div class="t" style="left:1567.36px;top:215.25px;font-size:13px;color:#e8e8e8;letter-spacing:0.000px;">1.65 m</div>
<div class="t" style="left:1615.78px;top:215.25px;font-size:13px;color:#e8e8e8;letter-spacing:0.000px;">5.25 g</div>
<div class="a" style="left:1690px;top:214px;width:16px;height:15px;background:#555555"></div>
<svg style="left:1692px;top:216px;" width="12" height="10" viewBox="0 0 12 10"><path d="M1.2 5 L4.5 8.3 L10.8 1.5" fill="none" stroke="#00c040" stroke-width="1.6"/></svg>
<div class="a" style="left:1317px;top:238px;width:9px;height:9px;background:#f03c3c"></div>
<div class="t" style="left:1334.14px;top:236.30px;font-size:13px;color:#e8e8e8;letter-spacing:0.000px;">Top surface</div>
<div class="t" style="left:1444.36px;top:236.30px;font-size:13px;color:#e8e8e8;letter-spacing:0.000px;">1m51s</div>
<div class="t" style="left:1505.96px;top:236.30px;font-size:13px;color:#e8e8e8;letter-spacing:0.000px;">1.6%</div>
<div class="t" style="left:1567.88px;top:236.30px;font-size:13px;color:#e8e8e8;letter-spacing:0.000px;">0.31 m</div>
<div class="t" style="left:1615.78px;top:236.30px;font-size:13px;color:#e8e8e8;letter-spacing:0.000px;">0.99 g</div>
<div class="a" style="left:1690px;top:235px;width:16px;height:15px;background:#555555"></div>
<svg style="left:1692px;top:238px;" width="12" height="10" viewBox="0 0 12 10"><path d="M1.2 5 L4.5 8.3 L10.8 1.5" fill="none" stroke="#00c040" stroke-width="1.6"/></svg>
<div class="a" style="left:1317px;top:259px;width:9px;height:9px;background:#6e5ad0"></div>
<div class="t" style="left:1333.36px;top:257.35px;font-size:13px;color:#e8e8e8;letter-spacing:0.000px;">Bottom surface</div>
<div class="t" style="left:1444.88px;top:257.35px;font-size:13px;color:#e8e8e8;letter-spacing:0.000px;">3m50s</div>
<div class="t" style="left:1506.48px;top:257.35px;font-size:13px;color:#e8e8e8;letter-spacing:0.000px;">3.3%</div>
<div class="t" style="left:1567.88px;top:257.35px;font-size:13px;color:#e8e8e8;letter-spacing:0.000px;">0.47 m</div>
<div class="t" style="left:1615.26px;top:257.35px;font-size:13px;color:#e8e8e8;letter-spacing:0.000px;">1.50 g</div>
<div class="a" style="left:1690px;top:256px;width:16px;height:15px;background:#555555"></div>
<svg style="left:1692px;top:259px;" width="12" height="10" viewBox="0 0 12 10"><path d="M1.2 5 L4.5 8.3 L10.8 1.5" fill="none" stroke="#00c040" stroke-width="1.6"/></svg>
<div class="a" style="left:1317px;top:280px;width:9px;height:9px;background:#4a86c8"></div>
<div class="t" style="left:1333.36px;top:278.40px;font-size:13px;color:#e8e8e8;letter-spacing:0.000px;">Bridge</div>
<div class="t" style="left:1444.88px;top:278.40px;font-size:13px;color:#e8e8e8;letter-spacing:0.000px;">5m18s</div>
<div class="t" style="left:1506.74px;top:278.40px;font-size:13px;color:#e8e8e8;letter-spacing:0.000px;">4.5%</div>
<div class="t" style="left:1567.88px;top:278.40px;font-size:13px;color:#e8e8e8;letter-spacing:0.000px;">0.64 m</div>
<div class="t" style="left:1615.65px;top:278.40px;font-size:13px;color:#e8e8e8;letter-spacing:0.000px;">2.02 g</div>
<div class="a" style="left:1690px;top:277px;width:16px;height:15px;background:#555555"></div>
<svg style="left:1692px;top:280px;" width="12" height="10" viewBox="0 0 12 10"><path d="M1.2 5 L4.5 8.3 L10.8 1.5" fill="none" stroke="#00c040" stroke-width="1.6"/></svg>
<div class="a" style="left:1317px;top:301px;width:9px;height:9px;background:#ffffff"></div>
<div class="t" style="left:1333.75px;top:299.45px;font-size:13px;color:#e8e8e8;letter-spacing:0.000px;">Gap infill</div>
<div class="t" style="left:1444.75px;top:299.45px;font-size:13px;color:#e8e8e8;letter-spacing:0.000px;">6m55s</div>
<div class="t" style="left:1506.48px;top:299.45px;font-size:13px;color:#e8e8e8;letter-spacing:0.000px;">5.9%</div>
<div class="t" style="left:1567.88px;top:299.45px;font-size:13px;color:#e8e8e8;letter-spacing:0.000px;">0.79 m</div>
<div class="t" style="left:1615.65px;top:299.45px;font-size:13px;color:#e8e8e8;letter-spacing:0.000px;">2.50 g</div>
<div class="a" style="left:1690px;top:298px;width:16px;height:15px;background:#555555"></div>
<svg style="left:1692px;top:301px;" width="12" height="10" viewBox="0 0 12 10"><path d="M1.2 5 L4.5 8.3 L10.8 1.5" fill="none" stroke="#00c040" stroke-width="1.6"/></svg>
<div class="a" style="left:1317px;top:322px;width:9px;height:9px;background:#00ff00"></div>
<div class="t" style="left:1333.75px;top:320.50px;font-size:13px;color:#e8e8e8;letter-spacing:0.000px;">Support</div>
<div class="t" style="left:1444.36px;top:320.50px;font-size:13px;color:#e8e8e8;letter-spacing:0.000px;">18m40s</div>
<div class="t" style="left:1505.96px;top:320.50px;font-size:13px;color:#e8e8e8;letter-spacing:0.000px;">15.8%</div>
<div class="t" style="left:1567.75px;top:320.50px;font-size:13px;color:#e8e8e8;letter-spacing:0.000px;">2.34 m</div>
<div class="t" style="left:1615.65px;top:320.50px;font-size:13px;color:#e8e8e8;letter-spacing:0.000px;">7.41 g</div>
<div class="a" style="left:1690px;top:319px;width:16px;height:15px;background:#555555"></div>
<svg style="left:1692px;top:322px;" width="12" height="10" viewBox="0 0 12 10"><path d="M1.2 5 L4.5 8.3 L10.8 1.5" fill="none" stroke="#00c040" stroke-width="1.6"/></svg>
<div class="a" style="left:1317px;top:343px;width:9px;height:9px;background:#008000"></div>
<div class="t" style="left:1333.75px;top:341.55px;font-size:13px;color:#e8e8e8;letter-spacing:0.000px;">Support interface</div>
<div class="t" style="left:1444.36px;top:341.55px;font-size:13px;color:#e8e8e8;letter-spacing:0.000px;">1m26s</div>
<div class="t" style="left:1505.96px;top:341.55px;font-size:13px;color:#e8e8e8;letter-spacing:0.000px;">1.2%</div>
<div class="t" style="left:1567.88px;top:341.55px;font-size:13px;color:#e8e8e8;letter-spacing:0.000px;">0.21 m</div>
<div class="t" style="left:1615.78px;top:341.55px;font-size:13px;color:#e8e8e8;letter-spacing:0.000px;">0.67 g</div>
<div class="a" style="left:1690px;top:340px;width:16px;height:15px;background:#555555"></div>
<svg style="left:1692px;top:343px;" width="12" height="10" viewBox="0 0 12 10"><path d="M1.2 5 L4.5 8.3 L10.8 1.5" fill="none" stroke="#00c040" stroke-width="1.6"/></svg>
<div class="a" style="left:1317px;top:364px;width:9px;height:9px;background:#003a00"></div>
<div class="t" style="left:1333.75px;top:362.60px;font-size:13px;color:#e8e8e8;letter-spacing:0.000px;">Support transition</div>
<div class="t" style="left:1444.75px;top:362.60px;font-size:13px;color:#e8e8e8;letter-spacing:0.000px;">2m5s</div>
<div class="t" style="left:1505.96px;top:362.60px;font-size:13px;color:#e8e8e8;letter-spacing:0.000px;">1.8%</div>
<div class="t" style="left:1567.88px;top:362.60px;font-size:13px;color:#e8e8e8;letter-spacing:0.000px;">0.21 m</div>
<div class="t" style="left:1615.78px;top:362.60px;font-size:13px;color:#e8e8e8;letter-spacing:0.000px;">0.68 g</div>
<div class="a" style="left:1690px;top:361px;width:16px;height:15px;background:#555555"></div>
<svg style="left:1692px;top:364px;" width="12" height="10" viewBox="0 0 12 10"><path d="M1.2 5 L4.5 8.3 L10.8 1.5" fill="none" stroke="#00c040" stroke-width="1.6"/></svg>
<div class="a" style="left:1317px;top:385px;width:9px;height:9px;background:#5ed4a0"></div>
<div class="t" style="left:1333.75px;top:383.65px;font-size:13px;color:#e8e8e8;letter-spacing:0.000px;">Custom</div>
<div class="t" style="left:1444.88px;top:383.65px;font-size:13px;color:#e8e8e8;letter-spacing:0.000px;">5m54s</div>
<div class="t" style="left:1506.48px;top:383.65px;font-size:13px;color:#e8e8e8;letter-spacing:0.000px;">5.0%</div>
<div class="t" style="left:1567.88px;top:383.65px;font-size:13px;color:#e8e8e8;letter-spacing:0.000px;">0.02 m</div>
<div class="t" style="left:1615.78px;top:383.65px;font-size:13px;color:#e8e8e8;letter-spacing:0.000px;">0.08 g</div>
<div class="a" style="left:1690px;top:382px;width:16px;height:15px;background:#555555"></div>
<svg style="left:1692px;top:385px;" width="12" height="10" viewBox="0 0 12 10"><path d="M1.2 5 L4.5 8.3 L10.8 1.5" fill="none" stroke="#00c040" stroke-width="1.6"/></svg>
<div class="a" style="left:1317px;top:406px;width:9px;height:9px;background:#3c4aa8"></div>
<div class="t" style="left:1334.14px;top:404.70px;font-size:13px;color:#e8e8e8;letter-spacing:0.000px;">Travel</div>
<div class="t" style="left:1444.75px;top:404.70px;font-size:13px;color:#e8e8e8;letter-spacing:0.000px;">21m24s</div>
<div class="t" style="left:1505.96px;top:404.70px;font-size:13px;color:#e8e8e8;letter-spacing:0.000px;">18.1%</div>
<div class="a" style="left:1690px;top:403px;width:16px;height:15px;background:#555555"></div>
<div class="a" style="left:1317px;top:428px;width:9px;height:9px;background:#e020e0"></div>
<div class="t" style="left:1333.36px;top:425.75px;font-size:13px;color:#e8e8e8;letter-spacing:0.000px;">Retract</div>
<div class="a" style="left:1690px;top:424px;width:16px;height:15px;background:#555555"></div>
<div class="a" style="left:1317px;top:449px;width:9px;height:9px;background:#40b0e0"></div>
<div class="t" style="left:1333.36px;top:446.80px;font-size:13px;color:#e8e8e8;letter-spacing:0.000px;">Unretract</div>
<div class="a" style="left:1690px;top:446px;width:16px;height:15px;background:#555555"></div>
<div class="a" style="left:1317px;top:470px;width:9px;height:9px;background:#ffff00"></div>
<div class="t" style="left:1334.40px;top:467.85px;font-size:13px;color:#e8e8e8;letter-spacing:0.000px;">Wipe</div>
<div class="a" style="left:1690px;top:467px;width:16px;height:15px;background:#555555"></div>
<div class="a" style="left:1317px;top:491px;width:9px;height:9px;background:#e8e8e8"></div>
<div class="t" style="left:1333.75px;top:488.90px;font-size:13px;color:#e8e8e8;letter-spacing:0.000px;">Seams</div>
<div class="a" style="left:1690px;top:488px;width:16px;height:15px;background:#555555"></div>
<svg style="left:1692px;top:490px;" width="12" height="10" viewBox="0 0 12 10"><path d="M1.2 5 L4.5 8.3 L10.8 1.5" fill="none" stroke="#00c040" stroke-width="1.6"/></svg>
<div class="t" style="left:1315.87px;top:517.82px;font-size:13.5px;color:#f4f4f4;letter-spacing:-0.200px;font-weight:bold;">Total Estimation</div>
<div class="a" style="left:1305px;top:536px;width:458px;height:1px;background:#b8b8b8"></div>
<div class="t" style="left:1315.74px;top:540.95px;font-size:13px;color:#e8e8e8;letter-spacing:0.000px;">Total Filament:</div>
<div class="t" style="left:1484.46px;top:540.95px;font-size:13px;color:#e8e8e8;letter-spacing:0.000px;">15.57 m</div>
<div class="t" style="left:1546.74px;top:540.95px;font-size:13px;color:#e8e8e8;letter-spacing:0.000px;">49.45 g</div>
<div class="t" style="left:1314.96px;top:559.95px;font-size:13px;color:#e8e8e8;letter-spacing:0.000px;">Model Filament:</div>
<div class="t" style="left:1484.46px;top:559.95px;font-size:13px;color:#e8e8e8;letter-spacing:0.000px;">12.81 m</div>
<div class="t" style="left:1546.74px;top:559.95px;font-size:13px;color:#e8e8e8;letter-spacing:0.000px;">40.69 g</div>
<div class="t" style="left:1315.35px;top:578.95px;font-size:13px;color:#e8e8e8;letter-spacing:0.000px;">Cost:</div>
<div class="t" style="left:1484.46px;top:578.95px;font-size:13px;color:#e8e8e8;letter-spacing:0.000px;">1.48</div>
<div class="t" style="left:1314.96px;top:597.95px;font-size:13px;color:#e8e8e8;letter-spacing:0.000px;">Prepare and timelapse time:</div>
<div class="t" style="left:1484.85px;top:597.95px;font-size:13px;color:#e8e8e8;letter-spacing:0.000px;">6m4s + 4m1s</div>
<div class="t" style="left:1314.96px;top:616.95px;font-size:13px;color:#e8e8e8;letter-spacing:0.000px;">Model printing time:</div>
<div class="t" style="left:1484.46px;top:616.95px;font-size:13px;color:#e8e8e8;letter-spacing:0.000px;">1h48m</div>
<div class="t" style="left:1315.74px;top:635.95px;font-size:13px;color:#e8e8e8;letter-spacing:0.000px;">Total time:</div>
<div class="t" style="left:1484.46px;top:635.95px;font-size:13px;color:#e8e8e8;letter-spacing:0.000px;">1h58m</div>
<div class="a" style="left:1841px;top:168px;width:24px;height:722px;background:#fff;border-radius:12px"></div>
<div class="a" style="left:1847px;top:180px;width:12px;height:698px;background:#00ae42"></div>
<svg style="left:1839px;top:165px;" width="28" height="28" viewBox="0 0 28 28"><circle cx="14" cy="14" r="12" fill="#fff"/><circle cx="14" cy="14" r="10" fill="#00ae42"/><path d="M14 8.5 V19.5 M8.5 14 H19.5" stroke="#fff" stroke-width="1.3"/></svg>
<svg style="left:1839px;top:865px;" width="28" height="28" viewBox="0 0 28 28"><circle cx="14" cy="14" r="12" fill="#fff"/><circle cx="14" cy="14" r="10" fill="#00ae42"/></svg>
<svg style="left:1788px;top:145px;" width="48" height="38" viewBox="0 0 48 38"><path d="M3 0 H41 Q44 0 44 3 V34 L48 38 L41 34 H3 Q0 34 0 31 V3 Q0 0 3 0 Z" fill="#fff"/></svg>
<div class="t" style="left:1800.90px;top:147.97px;font-size:12.5px;color:#1fae50;letter-spacing:0.362px;">375</div>
<div class="t" style="left:1793.75px;top:162.88px;font-size:12.5px;color:#1fae50;letter-spacing:0.269px;">40.40</div>
<svg style="left:1792px;top:875px;" width="44" height="38" viewBox="0 0 44 38"><path d="M3 4 H33 L39 0 L39 34 Q39 37 36 37 H3 Q0 37 0 34 V7 Q0 4 3 4 Z" fill="#fff"/></svg>
<div class="t" style="left:1810.00px;top:882.17px;font-size:12.5px;color:#1fae50;letter-spacing:0.000px;">1</div>
<div class="t" style="left:1800.50px;top:897.38px;font-size:12.5px;color:#1fae50;letter-spacing:0.542px;">0.20</div>
<div class="a" style="left:696px;top:966px;width:839px;height:24px;background:#fff;border-radius:12px"></div>
<div class="a" style="left:702px;top:972px;width:820px;height:12px;background:#00ae42;border-radius:6px"></div>
<svg style="left:1508px;top:964px;" width="28" height="28" viewBox="0 0 28 28"><circle cx="14" cy="14" r="12" fill="#fff"/><circle cx="14" cy="14" r="10" fill="#00ae42"/></svg>
<svg style="left:1536px;top:968px;" width="32" height="20" viewBox="0 0 32 20"><path d="M6 1 Q6 0 8 0 H29 Q31 0 31 2 V17 Q31 19 29 19 H8 Q6 19 6 17 V12 L1 9.5 L6 7 Z" fill="#fff"/></svg>
<div class="t" style="left:1547.17px;top:971.38px;font-size:12.5px;color:#1fae50;letter-spacing:0.325px;">70</div>
<svg style="left:1842px;top:968px;" width="22" height="20" viewBox="0 0 22 20"><path d="M11 1 L21 6 L11 11 L1 6 Z" fill="#00ae42"/><path d="M1 10 L11 15 L21 10" fill="none" stroke="#00ae42" stroke-width="2.2"/><path d="M1 14 L11 19 L21 14" fill="none" stroke="#00ae42" stroke-width="2.2"/></svg>
<svg style="left:529px;top:962px;" width="36" height="36" viewBox="0 0 36 36"><circle cx="18" cy="18" r="18" fill="#f8f8f8"/><path d="M8 13 V9 Q8 8 9 8 H13 M23 8 H27 Q28 8 28 9 V13 M28 23 V27 Q28 28 27 28 H23 M13 28 H9 Q8 28 8 27 V23" fill="none" stroke="#555" stroke-width="1.6"/><path d="M18 11.5 L24 15 V22 L18 25.5 L12 22 V15 Z M12 15 L18 18.5 L24 15 M18 18.5 V25.5" fill="none" stroke="#555" stroke-width="1.4" stroke-linejoin="round"/></svg>
<svg style="left:398px;top:900px;" width="104" height="100" viewBox="0 0 104 100">
<polygon points="20,27 35.5,3.4 97.7,8.2 82.4,28.3" fill="#d0d0d0"/>
<polygon points="82.4,28.3 97.7,8.2 97.7,72.3 82.4,94.3" fill="#bababa"/>
<polygon points="20.2,27.3 82.4,28.3 82.4,94.3 20,85.7" fill="#c6c6c6"/>
<path d="M30 20 L90 22 M50 5 L38 27 M70 7 L60 28" stroke="#dadada" stroke-width="0.6"/>
<text x="60" y="23" font-family="Liberation Sans" font-size="8" fill="#333" transform="rotate(-25 60 23)">Top</text>
<text x="40" y="64" font-family="Liberation Sans" font-size="13" fill="#555">Left</text>
<text x="85" y="62" font-family="Liberation Sans" font-size="7" fill="#444" transform="rotate(-60 85 62)">Front</text>
<path d="M82.4 94 V30" stroke="#7f7fcc" stroke-width="2.2"/><polygon points="76,41 82.4,27 89,41" fill="#7f7fcc"/>
<text x="76" y="21" font-family="Liberation Sans" font-size="10" fill="#7f7fcc">Z</text>
<path d="M82.4 94 L97 72" stroke="#cc7f7f" stroke-width="2.2"/><polygon points="91,70 101,63 98,78" fill="#cc7f7f"/>
<text x="96" y="75" font-family="Liberation Sans" font-size="10" fill="#cc7f7f">X</text>
<path d="M82.4 94 L28 86" stroke="#7fcc7f" stroke-width="2.2"/><polygon points="31,80 15,84 30,92" fill="#7fcc7f"/>
<text x="1" y="86" font-family="Liberation Sans" font-size="11" fill="#7fcc7f">y</text>
</svg></body></html>
